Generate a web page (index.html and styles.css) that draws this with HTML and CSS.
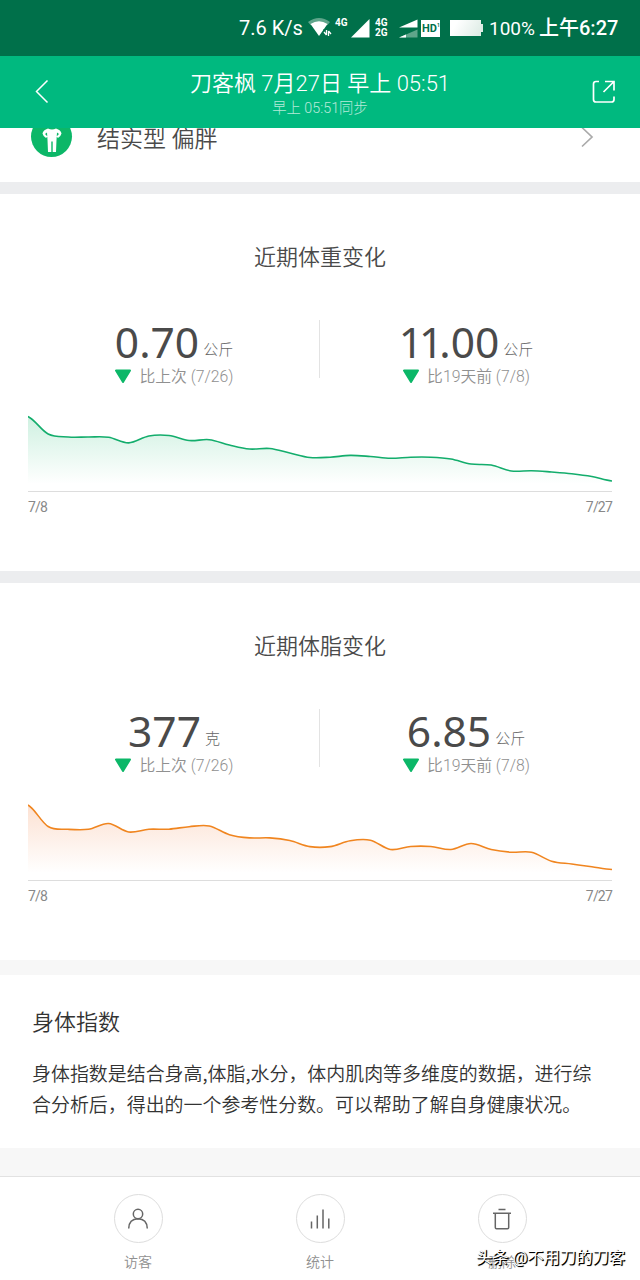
FILE: index.html
```html
<!DOCTYPE html>
<html lang="zh-CN">
<head>
    <meta charset="UTF-8">
    <meta name="viewport" content="width=device-width, initial-scale=1.0">
    <title>体重报告</title>
    <link rel="stylesheet" href="styles.css">
</head>
<body>
    <div class="status-bar">
        <span class="speed">7.6 K/s</span>
        <svg class="wifi" width="24" height="20" viewBox="0 0 24 20">
            <path d="M0 4Q11 -4 22 4L19.500 7Q11 1.500 2.500 7Z" fill="#5fa58b"/>
            <path d="M2.500 6Q11 0.500 19.500 6L11 18Z" fill="#fff"/>
            <path d="M15 18V11.500h8V18Z" fill="#00704a"/>
            <path d="M18.500 12v5M18.500 17l-2.500-3M20.500 18v-5M20.500 13l2.500 3" fill="none" stroke="#fff" stroke-width="1.300"/>
        </svg>
        <span class="net net-top">4G</span>
        <svg class="signal" width="19" height="19" viewBox="0 0 19 19"><path d="M0 18.500L18.500 0v18.500Z" fill="#fff"/></svg>
        <span class="net net-pair">4G<br>2G</span>
        <svg class="signal-dual" width="19" height="19" viewBox="0 0 19 19">
            <path d="M0 8.500L18.500 0.500v8Z" fill="#fff"/>
            <path d="M0 18.500L18.500 10.500v8Z" fill="#5fa58b"/>
            <path d="M0 18.500L7 15.500v3Z" fill="#fff"/>
        </svg>
        <span class="hd">HD<sup>1</sup></span>
        <span class="battery"></span>
        <span class="percent">100%</span>
        <span class="clock">上午6:27</span>
    </div>

    <header class="header">
        <svg class="back" width="14" height="24" viewBox="0 0 14 24"><path d="M12.500 0.500L1.500 11.500L12.500 22.500" fill="none" stroke="#fff" stroke-width="1.500"/></svg>
        <div class="header-text">
            <h1 class="header-title">刀客枫 7月27日 早上 05:51</h1>
            <p class="header-sub">早上 05:51同步</p>
        </div>
        <svg class="share" width="24" height="24" viewBox="0 0 24 24"><path d="M7 1.500H4Q1.500 1.500 1.500 4V19.500Q1.500 22 4 22H19.500Q22 22 22 19.500V16.500M13 1.500H22V10.500M22 1.500L11.500 12" fill="none" stroke="#fff" stroke-width="1.700"/></svg>
    </header>

    <main class="content">
        <section class="body-type">
            <svg class="body-icon" width="42" height="42" viewBox="0 0 42 42">
                <circle cx="20.500" cy="20.500" r="20.500" fill="#0cb768"/>
                <circle cx="21" cy="7" r="3.500" fill="#fff"/>
                <path d="M17 12.500Q21 14.500 25 12.500Q30 14 30.500 17.500Q30 20 27 22L25.500 20.500L28 18L26 16.500L25.500 24L25 36H21.700V25.500H20.300V36H17L16.500 24L16 16.500L14 18L16.500 20.500L15 22Q12 20 11.500 17.500Q12 14 17 12.500Z" fill="#fff"/>
            </svg>
            <span class="body-name">结实型 偏胖</span>
            <svg class="more" width="13" height="22" viewBox="0 0 13 22"><path d="M1 1.500L11 11L1 20.500" fill="none" stroke="#aaa" stroke-width="1.700"/></svg>
        </section>

        <section class="card">
            <h2 class="card-title">近期体重变化</h2>
            <div class="stats">
                <div class="stat">
                    <div class="value">0.70<span class="unit">公斤</span></div>
                    <div class="compare"><svg class="down" width="18" height="15" viewBox="0 0 18 15"><path d="M2 1.500H16L9 13Z"/></svg>比上次 (7/26)</div>
                </div>
                <div class="stat">
                    <div class="value"><span class="ones">11</span>.00<span class="unit">公斤</span></div>
                    <div class="compare"><svg class="down" width="18" height="15" viewBox="0 0 18 15"><path d="M2 1.500H16L9 13Z"/></svg>比19天前 (7/8)</div>
                </div>
            </div>
            <svg class="chart" width="584" height="87" viewBox="0 0 584 87" data-values="12.5,30,33,33,33.300,38.900,32,31.500,36.500,35.700,41,45,44.500,49,53.500,53.200,51.400,52.500,54.300,53.200,53.200,55,60,61,67,66.700,68,69.700,72.500,77">
                <defs>
                    <linearGradient id="green-fill" gradientUnits="userSpaceOnUse" x1="0" y1="12" x2="0" y2="80">
                        <stop offset="0" stop-color="#0cb768" stop-opacity="0.200"/>
                        <stop offset="1" stop-color="#0cb768" stop-opacity="0"/>
                    </linearGradient>
                </defs>
                <path class="area" fill="url(#green-fill)"/>
                <path class="line line-green"/>
            </svg>
            <div class="dates"><span>7/8</span><span>7/27</span></div>
        </section>

        <section class="card card-fat">
            <h2 class="card-title">近期体脂变化</h2>
            <div class="stats">
                <div class="stat">
                    <div class="value">377<span class="unit">克</span></div>
                    <div class="compare"><svg class="down" width="18" height="15" viewBox="0 0 18 15"><path d="M2 1.500H16L9 13Z"/></svg>比上次 (7/26)</div>
                </div>
                <div class="stat">
                    <div class="value">6.85<span class="unit">公斤</span></div>
                    <div class="compare"><svg class="down" width="18" height="15" viewBox="0 0 18 15"><path d="M2 1.500H16L9 13Z"/></svg>比19天前 (7/8)</div>
                </div>
            </div>
            <svg class="chart" width="584" height="87" viewBox="0 0 584 87" data-values="12,33.500,36.300,36.300,30.500,39,36.200,36.200,33.700,33,41.700,44.900,44.900,47.500,53.600,53.600,47.700,47.200,56.500,53.500,53.500,56.500,50.500,56.500,59.200,59.200,68.200,71,73.800,76.500">
                <defs>
                    <linearGradient id="orange-fill" gradientUnits="userSpaceOnUse" x1="0" y1="12" x2="0" y2="80">
                        <stop offset="0" stop-color="#f26b21" stop-opacity="0.200"/>
                        <stop offset="1" stop-color="#f26b21" stop-opacity="0"/>
                    </linearGradient>
                </defs>
                <path class="area" fill="url(#orange-fill)"/>
                <path class="line line-orange"/>
            </svg>
            <div class="dates"><span>7/8</span><span>7/27</span></div>
        </section>

        <section class="about">
            <h2 class="about-title">身体指数</h2>
            <p class="about-text">身体指数是结合身高,体脂,水分，体内肌肉等多维度的数据，进行综<br>合分析后，得出的一个参考性分数。可以帮助了解自身健康状况。</p>
        </section>
    </main>

    <footer class="toolbar">
        <div class="tool">
            <span class="tool-icon"><svg width="22" height="22" viewBox="0 0 22 22"><circle cx="11" cy="6" r="4.700"/><path d="M1.700 20.500Q2 11 11 10.800Q20 11 20.300 20.500"/></svg></span>
            <span>访客</span>
        </div>
        <div class="tool">
            <span class="tool-icon"><svg width="22" height="22" viewBox="0 0 22 22"><path d="M2.500 13.500V20.500M8.300 7.500V20.500M14 1.500V20.500M19.800 10.500V20.500"/></svg></span>
            <span>统计</span>
        </div>
        <div class="tool">
            <span class="tool-icon"><svg width="22" height="22" viewBox="0 0 22 22"><path d="M7.500 1.500H14.500M2 5.300H20M4.300 5.300V19.500Q4.300 20.700 5.500 20.700H16.500Q17.700 20.700 17.700 19.500V5.300"/></svg></span>
            <span>删除</span>
        </div>
    </footer>
    <div class="watermark">头条 @不用刀的刀客</div>

    <script src="chart.js"></script>
</body>
</html>
```
FILE: styles.css
```css
* {
    margin: 0;
    padding: 0;
    box-sizing: border-box;
}

body {
    width: 640px;
    height: 1280px;
    position: relative;
    display: flex;
    flex-direction: column;
    overflow: hidden;
    background: #fff;
    color: #4a4a4a;
    font-family: Roboto, "Noto Sans CJK SC", sans-serif;
}

svg {
    display: block;
    flex: none;
}

.status-bar {
    height: 56px;
    flex: none;
    display: flex;
    align-items: center;
    padding-left: 239px;
    background: #00704a;
    color: #fff;
    font-size: 20px;
    white-space: nowrap;
}

.speed {
    width: 69px;
    font-size: 20px;
}

.wifi {
    margin-right: 3px;
}

.net {
    font-size: 10px;
    line-height: 10px;
    font-weight: bold;
}

.net-top {
    width: 16px;
    margin-bottom: 10px;
}

.net-pair {
    width: 24px;
    margin-left: 5px;
}

.signal-dual {
    margin-right: 3px;
}

.hd {
    width: 19px;
    height: 17px;
    background: #fff;
    color: #00704a;
    font-size: 11px;
    line-height: 17px;
    font-weight: bold;
    padding-left: 1px;
}

.hd sup {
    font-size: 5px;
    vertical-align: 5px;
    line-height: 0;
}

.battery {
    width: 31px;
    height: 16px;
    margin-left: 10px;
    background: linear-gradient(120deg, #fff 20%, #dcebe4);
    position: relative;
}

.battery::after {
    content: '';
    position: absolute;
    right: -2px;
    top: 4px;
    width: 2px;
    height: 8px;
    background: #dcebe4;
}

.percent {
    width: 50px;
    margin-left: 8px;
    font-size: 19px;
}

.clock {
    font-size: 20px;
    line-height: 26px;
    font-weight: 500;
}

.header {
    height: 72px;
    flex: none;
    display: flex;
    align-items: center;
    padding: 0 24px 0 35px;
    background: #00b97f;
    color: #fff;
    z-index: 1;
}

.header-text {
    flex: 1;
    padding-right: 1px;
    text-align: center;
}

.header-title {
    font-size: 22px;
    line-height: 30px;
    font-weight: 350;
    margin-top: 3px;
}

.header-sub {
    font-size: 14.3px;
    line-height: 19px;
    font-weight: 300;
    opacity: 0.7;
}

.content {
    flex: 1;
    min-height: 0;
    overflow: hidden;
    background: #ecedef;
}

.body-type {
    height: 90px;
    margin-top: -36px;
    display: flex;
    align-items: center;
    padding: 0 46px 0 31px;
    background: #fff;
}

.body-name {
    flex: 1;
    margin-left: 24px;
    font-size: 23px;
    font-weight: 350;
}

.card {
    height: 377px;
    margin-top: 12px;
    padding: 48px 28px 0;
    background: #fff;
}

.card-title {
    font-size: 22px;
    line-height: 32px;
    font-weight: 350;
    text-align: center;
}

.stats {
    height: 58px;
    margin-top: 46px;
    display: flex;
    position: relative;
}

.stats::after {
    content: '';
    position: absolute;
    left: 291px;
    width: 1px;
    height: 58px;
    background: #e3e3e3;
}

.stat {
    flex: 1;
    display: flex;
    flex-direction: column;
    align-items: center;
}

.value {
    height: 46px;
    flex: none;
    font-family: "Noto Sans", "Noto Sans CJK SC", sans-serif;
    font-size: 42.5px;
    line-height: 44px;
    white-space: nowrap;
}

.ones {
    letter-spacing: -4px;
}

.unit {
    margin-left: 4px;
    font-family: "Noto Sans CJK SC", sans-serif;
    font-size: 15px;
    line-height: 1;
    font-weight: 300;
    vertical-align: 3px;
    color: #666;
}

.compare {
    display: flex;
    align-items: center;
    font-size: 15.8px;
    line-height: 21px;
    font-weight: 350;
    color: #909090;
}

.down {
    margin-right: 7px;
    fill: #0cb768;
    stroke: #0cb768;
    stroke-width: 2;
    stroke-linejoin: round;
}

.chart {
    margin-top: 26px;
}

.line {
    fill: none;
    stroke-width: 1.6;
}

.line-green {
    stroke: #13ad6c;
}

.line-orange {
    stroke: #f0851f;
}

.dates {
    display: flex;
    justify-content: space-between;
    padding-top: 6px;
    border-top: 1px solid #ddd;
    font-size: 14px;
    line-height: 19px;
    letter-spacing: -0.8px;
    color: #888;
}

.about {
    height: 188px;
    padding: 29px 32px 0;
    background: #fff;
    border-top: 15px solid #f7f7f7;
    color: #333;
    font-family: "Noto Sans CJK SC", sans-serif;
}

.about-title {
    font-size: 22px;
    line-height: 32px;
    font-weight: 350;
}

.about-text {
    margin-top: 21px;
    font-size: 18.95px;
    line-height: 31px;
    font-weight: 350;
    white-space: nowrap;
}

.toolbar {
    height: 132px;
    flex: none;
    display: flex;
    padding: 18px 47px 0;
    border-top: 28px solid #f7f7f7;
    box-shadow: inset 0 1px #e2e2e2;
}

.tool {
    flex: 1;
    display: flex;
    flex-direction: column;
    align-items: center;
    font-size: 14px;
    line-height: 20px;
    font-weight: 350;
    color: #909090;
}

.tool-icon {
    width: 49px;
    height: 49px;
    margin-bottom: 9px;
    display: flex;
    align-items: center;
    justify-content: center;
    border: 1px solid #ddd;
    border-radius: 50%;
}

.tool-icon svg {
    fill: none;
    stroke: #666;
    stroke-width: 1.5;
}

.watermark {
    position: absolute;
    right: 15px;
    bottom: 9px;
    font-size: 16.3px;
    line-height: 26px;
    color: #fff;
    text-shadow: 1px 1px 1px #000, 1px 1px 0 #000;
    white-space: nowrap;
}
```
FILE: chart.js
```js
// smooth line through evenly spaced values, plus the filled area below it
document.querySelectorAll('.chart').forEach(function (chart) {
    var values = chart.dataset.values.split(',').map(Number);
    var step = 584 / (values.length - 1);
    var d = 'M0 ' + values[0];

    for (var i = 1; i < values.length; i++) {
        var before = values[Math.max(i - 2, 0)];
        var from = values[i - 1];
        var to = values[i];
        var after = values[Math.min(i + 1, values.length - 1)];
        d += ' C' + [
            (i - 1 + 1 / 3) * step, from + (to - before) / 6,
            (i - 1 / 3) * step, to - (after - from) / 6,
            i * step, to
        ].join(' ');
    }

    chart.querySelector('.line').setAttribute('d', d);
    chart.querySelector('.area').setAttribute('d', d + ' V80 H0 Z');
});
```
